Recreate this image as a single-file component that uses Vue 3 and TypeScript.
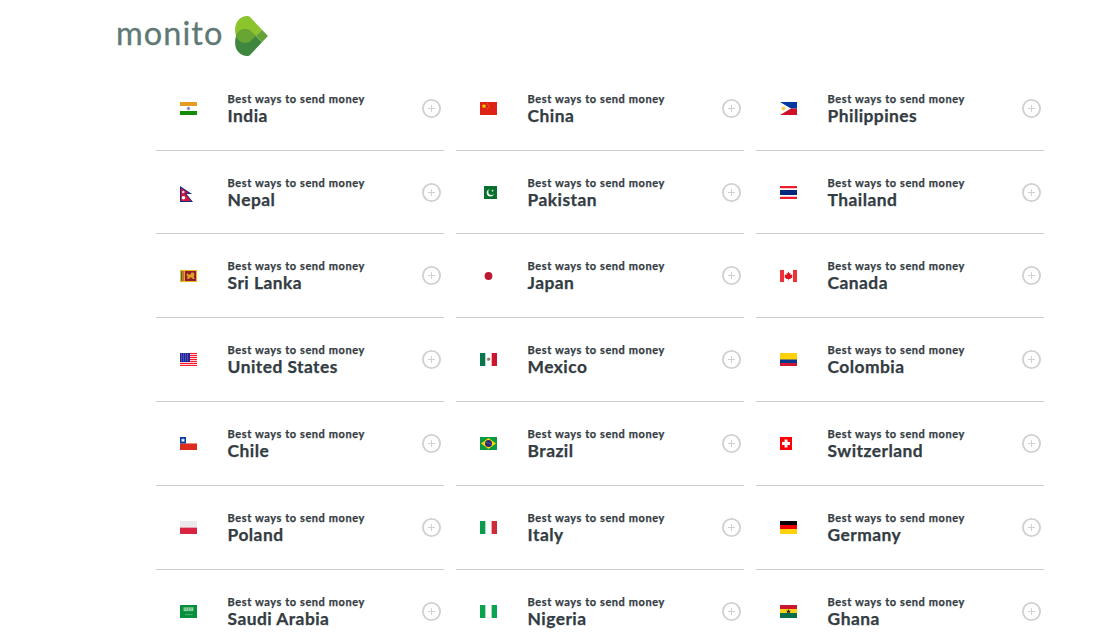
<template>
  <div class="page">
    <header class="header">
      <a class="logo">
        <span class="logo-text">monito</span>
        <svg class="logo-mark" viewBox="0 0 33 40">
          <path d="M15 1L27 13.7L20.7 20L15 25.5C11 28 4 27.5 1 20C-.6 15 -.2 8 3 4.5C6 1 9 0 12 0C13.5 0 14.3 .3 15 1Z" fill="#8cc42e" />
          <path d="M15 39L27 26.3L20.7 20L15 14.5C11 12 4 12.5 1 20C-.6 25 -.2 32 3 35.5C6 39 9 40 12 40C13.5 40 14.3 39.7 15 39Z" fill="#3f873e" />
          <path d="M1 20C4 12.5 11 12 15 14.5L20.7 20L15 25.5C11 28 4 27.5 1 20Z" fill="#69a532" />
          <path d="M20.7 20L27 13.7L33 20L27 26.3Z" fill="#65a338" />
        </svg>
      </a>
    </header>
    <main class="countries">
      <a
        v-for="country in countries"
        :key="country.name"
        class="country"
      >
        <svg
          class="flag"
          viewBox="0 0 17 13"
          v-html="country.flag"
        />
        <div class="label">
          <span class="subtitle">Best ways to send money</span>
          <span
            class="name"
            v-text="country.name"
          />
        </div>
        <svg class="plus" viewBox="0 0 19 19">
          <circle cx="9.5" cy="9.5" r="8.6" />
          <path d="M9.5 6v7M6 9.5h7" />
        </svg>
      </a>
    </main>
  </div>
</template>

<script setup lang="ts">
interface Country {
  name: string;
  flag: string;
}

const rect = (x: number, y: number, width: number, height: number, fill: string) =>
  `<rect x="${x}" y="${y}" width="${width}" height="${height}" fill="${fill}"/>`;

const path = (d: string, fill: string) => `<path d="${d}" fill="${fill}"/>`;

const circle = (x: number, y: number, r: number, fill: string) =>
  `<circle cx="${x}" cy="${y}" r="${r}" fill="${fill}"/>`;

const usStripes = [0, 2, 4, 6, 8, 10, 12].map((y) => rect(0, y, 17, 1, "#ff1828")).join("");
const usStars = [1, 3, 5, 7]
  .map((y) => [1.5, 3.5, 5.5, 7.5].map((x) => circle(x, y, 0.5, "#9da6db")).join(""))
  .join("");

const countries: Country[] = [
  {
    name: "India",
    flag: rect(0, 0, 17, 4, "#e99a20") + rect(0, 9, 17, 4, "#138a08")
      + circle(8.5, 6.5, 2, "#b6bedc") + circle(8.5, 6.5, 0.9, "#5369a9"),
  },
  {
    name: "China",
    flag: rect(0, 0, 17, 13, "#de2314")
      + path("M4 1.7L4.8 3.3H6.4L5.2 4.4L5.6 6.2L4 5.3L2.4 6.2L2.8 4.4L1.6 3.3H3.2Z", "#ffda00")
      + circle(7.5, 1.8, 0.6, "#ee7b10") + circle(9, 3.3, 0.6, "#ee7b10")
      + circle(9, 5.2, 0.6, "#ee7b10") + circle(7.5, 6.8, 0.6, "#ee7b10"),
  },
  {
    name: "Philippines",
    flag: rect(0, 0, 17, 6.5, "#0038a2") + rect(0, 6.5, 17, 6.5, "#ce1128")
      + path("M0 0L11 6.5L0 13Z", "#fff") + circle(3.5, 6.5, 2, "#f7d154")
      + circle(0.8, 2, 0.5, "#f7df85") + circle(0.8, 11, 0.5, "#f7df85") + circle(8.5, 6.5, 0.5, "#f7df85"),
  },
  {
    name: "Nepal",
    flag: path("M0 0L12 8H6.5L13 16H0Z", "#142c80") + path("M1 2L8.5 7H4.5L11 15H1Z", "#d7143a")
      + circle(3.2, 6, 1.3, "#f3cbd4") + circle(3.5, 11.8, 1.8, "#fff"),
  },
  {
    name: "Pakistan",
    flag: rect(4, 0, 13, 13, "#08702f") + circle(10.3, 6.8, 3.6, "#e9f2eb") + circle(11.4, 5.8, 3.1, "#08702f")
      + path("M12.4 3.2L13 4.2H14L13.2 5L13 6L12 5.2L11 5L12 4.4Z", "#c3dcc9"),
  },
  {
    name: "Thailand",
    flag: rect(0, 0, 17, 2, "#ed1c2d") + rect(0, 2, 17, 1, "#fbc6ce") + rect(0, 4, 17, 5, "#00267b")
      + rect(0, 10, 17, 1, "#fbc6ce") + rect(0, 11, 17, 2, "#ed1c2d"),
  },
  {
    name: "Sri Lanka",
    flag: rect(0, 0, 17, 12, "#f0b51b") + rect(1, 1, 1.6, 10, "#377a61") + rect(2.6, 1, 1.6, 10, "#dd6924")
      + rect(5, 1, 11, 10, "#8c1d34")
      + path("M7 8.8L7.6 6.5L6.4 5L7.2 3L8.4 4.5H10.5L11.5 2.5H13.5L14.5 4.5L13.8 6.5L14.6 9H12.6L12 7.5L10 7.7L9 9Z", "#e0a11e"),
  },
  {
    name: "Japan",
    flag: rect(0, 0, 17, 12, "#fff") + circle(8.5, 6, 3.9, "#bd1935"),
  },
  {
    name: "Canada",
    flag: rect(0, 0, 4, 12, "#f13037") + rect(13, 0, 4, 12, "#f13037")
      + path("M8.5 1.5L9.5 3.5L10.5 3L10.4 4.9L12.4 4.5L12 6.5L12.7 7.2L10 9.1H8.8V10.5H8.2V9.1H7L4.3 7.2L5 6.5L4.6 4.5L6.6 4.9L6.5 3L7.5 3.5Z", "#dc1420"),
  },
  {
    name: "United States",
    flag: rect(0, 0, 17, 13, "#ffd5da") + usStripes + rect(0, 0, 10, 9, "#21239a") + usStars,
  },
  {
    name: "Mexico",
    flag: rect(0, 0, 5, 13, "#08754f") + rect(5, 0, 1, 13, "#b5d7c9") + rect(11, 0, 1, 13, "#f3b7c1")
      + rect(12, 0, 5, 13, "#ce1530") + circle(8.5, 6.3, 1.8, "#a89984") + circle(9, 6, 0.8, "#735138"),
  },
  {
    name: "Colombia",
    flag: rect(0, 0, 17, 6, "#fdd20d") + rect(0, 6, 17, 1, "#8b834c") + rect(0, 7, 17, 3, "#08368d")
      + rect(0, 10, 17, 3, "#ce1730"),
  },
  {
    name: "Chile",
    flag: rect(0, 6, 17, 1, "#ea8d88") + rect(0, 7, 17, 6, "#dd2b1e") + rect(0, 0, 6, 6.5, "#0a3c9f")
      + path("M3 1L3.7 2.4H5.2L4.2 3.5L4.5 5L3 4.3L1.5 5L1.8 3.5L0.8 2.4H2.3Z", "#fff"),
  },
  {
    name: "Brazil",
    flag: rect(0, 0, 17, 13, "#0b993f") + path("M8.5 1L16 6.5L8.5 12L1 6.5Z", "#f9d50d")
      + circle(8.5, 6.5, 3.5, "#2a2977")
      + '<path d="M5.3 5.7C8 5.5 10 6.2 11.6 8" fill="none" stroke="#7078a0" stroke-width=".6"/>',
  },
  {
    name: "Switzerland",
    flag: rect(0, 0, 12, 13, "#fd0004") + rect(4.6, 2.5, 2.9, 8, "#fff") + rect(2, 5, 8, 3, "#fff"),
  },
  {
    name: "Poland",
    flag: rect(0, 0, 17, 6, "#ebebed") + rect(0, 6, 17, 1, "#e5a6b1") + rect(0, 7, 17, 6, "#d82440"),
  },
  {
    name: "Italy",
    flag: rect(0, 0, 5, 13, "#0b9b4d") + rect(5, 0, 1, 13, "#afdcc4") + rect(11, 0, 1, 13, "#edaeb3")
      + rect(12, 0, 5, 13, "#cf2b37"),
  },
  {
    name: "Germany",
    flag: rect(0, 0, 17, 4, "#000") + rect(0, 4, 17, 4, "#f00000") + rect(0, 8, 17, 5, "#ffd108"),
  },
  {
    name: "Saudi Arabia",
    flag: rect(0, 0, 17, 13, "#06903d") + rect(3.3, 2.2, 10.2, 4, "#63b981")
      + '<path d="M4 5.5H7M5 2.5V5M7.5 2.5V5.5M9 5H12M10 2.5V4.5M12.5 2.5V6" stroke="#b2dbbf" stroke-width=".7"/>'
      + rect(5, 9.2, 7.5, 0.9, "#5cb47a"),
  },
  {
    name: "Nigeria",
    flag: rect(0, 0, 5, 13, "#0ba350") + rect(5, 0, 1, 13, "#a9dcbf") + rect(11, 0, 1, 13, "#a9dcbf")
      + rect(12, 0, 5, 13, "#0ba350"),
  },
  {
    name: "Ghana",
    flag: rect(0, 0, 17, 4, "#ce1630") + rect(0, 4, 17, 4, "#fad116") + rect(0, 8, 17, 5, "#087047")
      + path("M8.5 4L9.2 5.7H11L9.7 6.7L10.2 8.5L8.5 7.5L6.8 8.5L7.3 6.7L6 5.7H7.8Z", "#26230c"),
  },
];
</script>

<style>
body {
  background: #fff;
  overflow: hidden;
}
</style>

<style scoped>
.page {
  box-sizing: border-box;
  height: 637px;
  overflow: hidden;
  color: #333c42;
  font-family: Lato, "Open Sans", sans-serif;
}

.header {
  box-sizing: border-box;
  height: 66.8px;
  padding: 16px 0 0 116px;
}

.logo {
  display: flex;
}

.logo-text {
  width: 119px;
  color: #5f7974;
  font-size: 32.5px;
  letter-spacing: 1.05px;
  line-height: 33px;
  -webkit-text-stroke: 0.3px #5f7974;
}

.logo-mark {
  width: 33px;
  height: 40px;
}

.countries {
  display: grid;
  grid-template-columns: repeat(3, 288px);
  grid-auto-rows: 83.8px;
  column-gap: 12px;
  padding-left: 156px;
}

.country {
  box-sizing: border-box;
  display: flex;
  align-items: flex-start;
  padding: 0 3px 0 24px;
  border-bottom: 1px solid #cfcfcf;
}

.flag {
  flex: none;
  width: 17px;
  height: 13px;
  margin-top: 35.2px;
  overflow: visible;
}

.label {
  display: flex;
  flex: 1;
  flex-direction: column;
  margin: 24.06px 0 0 30.6px;
  font-weight: 700;
  white-space: nowrap;
}

.subtitle {
  font-size: 11px;
  letter-spacing: 0.58px;
  line-height: 15px;
  -webkit-text-stroke: 0.25px #333c42;
}

.name {
  font-size: 17.4px;
  letter-spacing: 0.45px;
  line-height: 19px;
  -webkit-text-stroke: 0.25px #333c42;
}

.plus {
  flex: none;
  width: 19px;
  height: 19px;
  margin-top: 32.1px;
  fill: none;
  stroke: #d0d0d0;
  stroke-width: 1.8;
}

.plus path {
  stroke-width: 1;
}
</style>
